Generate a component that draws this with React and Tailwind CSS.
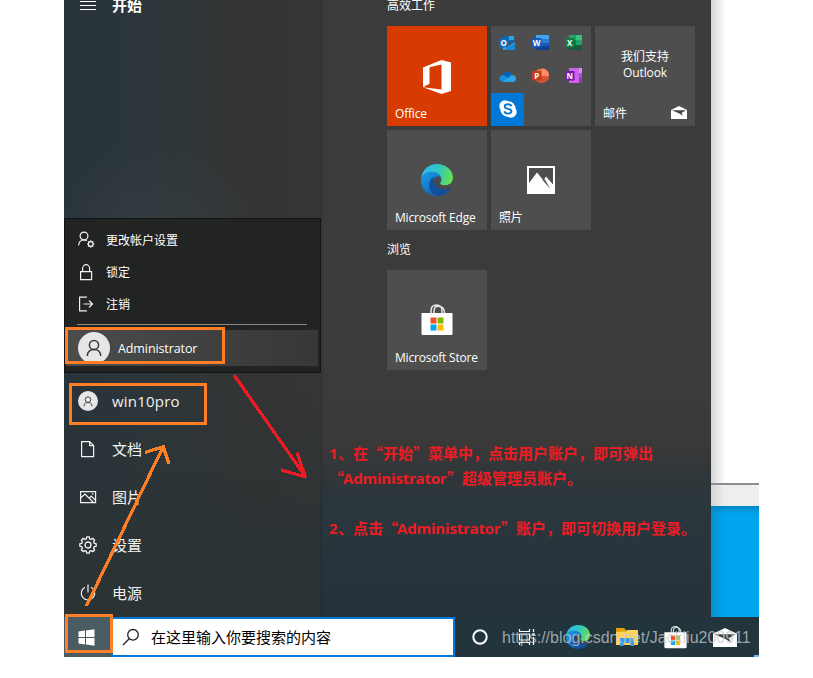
import React from "react";

const latin = "font-['Open_Sans','Noto_Sans_CJK_SC',sans-serif]";

function Person({ className }) {
  return (
    <svg viewBox="0 0 16 18" className={className} fill="none" stroke="#3a3a3a" strokeWidth="1.5">
      <circle cx="8" cy="6" r="4.6" />
      <path d="M1.3 17c0-4.200 3-6.500 6.700-6.500s6.700 2.300 6.700 6.500" />
    </svg>
  );
}

function EdgeLogo({ size, id }) {
  return (
    <svg width={size} height={size} viewBox="0 0 32 32">
      <defs>
        <linearGradient id={id + "a"} x1="0" y1="0.3" x2="1" y2="0.5">
          <stop offset="0" stopColor="#35b8f0" />
          <stop offset="0.5" stopColor="#2fc6c4" />
          <stop offset="1" stopColor="#66e04f" />
        </linearGradient>
        <linearGradient id={id + "b"} x1="0" y1="0" x2="0.6" y2="1">
          <stop offset="0" stopColor="#1c9de8" />
          <stop offset="1" stopColor="#0b65c0" />
        </linearGradient>
      </defs>
      <path d="M.2 14C1.200 5.500 8 0 16 0c9.500 0 16 6.500 16 13.500 0 5-3.700 8-8 8-3.300 0-5-1-5-2.300 0-1 1.300-1.500 1.300-3.800C20.300 11 16 8 11 8 6 8 2 10.500.2 14z" fill={`url(#${id}a)`} />
      <path d="M.1 15C1.500 10 6 7.700 10.500 7.700c5.500 0 9.800 3.500 9.800 7.700 0 2.200-1.300 2.800-1.300 3.900-1-3.300-3-4.300-5-4.300-3 0-5.500 3-5.500 7 0 5 4 9.600 9.500 10C8 32.700 0 25.500 0 17c0-.7 0-1.400.1-2z" fill={`url(#${id}b)`} />
      <path d="M13.800 12.300C10.500 13.500 8.300 17 8.300 21.500c0 5.500 4.200 10.300 9.700 10.300 5 0 9-2.800 11.200-6.600.4-.7 0-1.100-.7-.8-1.500.7-3.200 1-4.800 1-6 0-10.900-3.900-10.900-8.400 0-2 .3-3.500 1-4.700z" fill="#124f9c" />
      <path d="M16.300 12.200c2.300 0 4 1.500 4 3.400 0 1.800-1.300 2.500-1.300 3.600 0 1.400 2 2.300 5 2.300 1.800 0 3.500-.5 4.800-1.400l.5 4.300c-1.500.7-3 1-5.300 1-6 0-10.500-4-10.500-8.700 0-2.700 1.100-4.500 2.800-4.500z" fill="#46494c" />
    </svg>
  );
}

function StoreLogo({ w, h }) {
  return (
    <svg width={w} height={h} viewBox="0 0 32 31">
      <path d="M10 9.500V7c0-4 2.300-6 5.500-6S21 3 21 7v2.500M13 9.500V7c0-3 1.800-4.700 4.200-4.700 4 0 6.300 2 6.300 7.200" fill="none" stroke="#e6e6e6" strokeWidth="1.500" />
      <path d="M.5 9h31v20.500a1.500 1.500 0 0 1-1.500 1.500H2A1.500 1.500 0 0 1 .5 29.500z" fill="#fff" />
      <path d="M9.500 13.500h6v6h-6z" fill="#f25022" />
      <path d="M16.500 13.500h6v6h-6z" fill="#7fba00" />
      <path d="M9.500 20.500h6v6h-6z" fill="#00a4ef" />
      <path d="M16.500 20.500h6v6h-6z" fill="#ffb900" />
    </svg>
  );
}

function MailGlyph({ w, h }) {
  return (
    <svg width={w} height={h} viewBox="0 0 16 13" preserveAspectRatio="none">
      <path d="M0 4 8 0l8 4v9H0z" fill="#fff" />
      <path d="M1 4.200h14L10.500 7 12 9.800 8.300 7.500z" fill="#3f4446" />
    </svg>
  );
}

function Badge({ color, letter }) {
  return (
    <>
      <rect x="0" y="3" width="9.500" height="9.500" rx=".8" fill={color} />
      <text x="4.700" y="10.600" textAnchor="middle" fontSize="8" fontWeight="700" fill="#fff" fontFamily="Open Sans">{letter}</text>
    </>
  );
}

function SmallApp({ kind }) {
  return (
    <svg width="18" height="16" viewBox="0 0 18 16">
      {kind === "outlook" && (<>
        <path d="M5 1h10v7H5z" fill="#1066b5" /><path d="M10 1h5v4h-5z" fill="#28a8ea" />
        <path d="M4 7.500 10 11l6-4v8H4z" fill="#36b5f3" /><path d="M4 15 16 8v7z" fill="#1687d9" />
        <Badge color="#0f6cbd" letter="O" />
      </>)}
      {kind === "word" && (<>
        <path d="M4 0h13v5H4z" fill="#41a5ee" /><path d="M4 4h13v4H4z" fill="#2b7cd3" />
        <path d="M4 8h13v4H4z" fill="#185abd" /><path d="M4 11h13v4H4z" fill="#103f91" />
        <Badge color="#185abd" letter="W" />
      </>)}
      {kind === "excel" && (<>
        <path d="M4 0h7v5H4z" fill="#21a366" /><path d="M11 0h6v5h-6z" fill="#33c481" />
        <path d="M4 5h7v5H4z" fill="#107c41" /><path d="M11 5h6v5h-6z" fill="#21a366" />
        <path d="M4 10h13v5H4z" fill="#185c37" /><Badge color="#107c41" letter="X" />
      </>)}
      {kind === "onedrive" && (<>
        <path d="M3 10c0-4 2.500-6.500 5.500-6.500 2 0 3.500 1 4.500 3L9 13z" fill="#0364b8" />
        <path d="M.5 10.500C.5 8 2.500 7 4.500 7L15 14H4c-2 0-3.500-1.500-3.500-3.500z" fill="#1490df" />
        <path d="M4 14 12.500 7c3 0 4.500 1.500 4.500 3.700 0 2-1.300 3.300-3.500 3.300z" fill="#28a8ea" />
      </>)}
      {kind === "ppt" && (<>
        <circle cx="9.700" cy="7.700" r="7.300" fill="#ed6c47" /><path d="M9.700.4A7.300 7.300 0 0 1 17 7.700H9.700z" fill="#ff8f6b" />
        <path d="M2.500 8.500H17a7.300 7.300 0 0 1-14 2z" fill="#d35230" /><Badge color="#c43e1c" letter="P" />
      </>)}
      {kind === "onenote" && (<>
        <path d="M4 0h13v15H4z" fill="#ca64ea" /><path d="M14 0h3v5h-3z" fill="#d98cf0" />
        <path d="M14 5h3v5h-3z" fill="#ae4bd5" /><path d="M14 10h3v5h-3z" fill="#9332bf" />
        <Badge color="#7719aa" letter="N" />
      </>)}
    </svg>
  );
}

function Tile({ label, children, className = "bg-[#4e4e4e]", gap = "" }) {
  return (
    <div className={`flex h-[100px] w-[100px] flex-col ${className}`}>
      <div className={`flex flex-1 items-center justify-center ${gap}`}>{children}</div>
      <div className="h-[23px] whitespace-nowrap pl-2 text-[12px] leading-[22px] tracking-[-0.2px] text-white">{label}</div>
    </div>
  );
}

function PopupRow({ icon, label }) {
  return (
    <div className="flex h-8 items-center pl-[13px] text-[12px] text-white">
      <span className="w-[28px]">{icon}</span>
      <span className="whitespace-nowrap pt-[2px]">{label}</span>
    </div>
  );
}

function NavRow({ icon, label, tracking = "" }) {
  return (
    <div className="flex h-12 items-center pl-[14px] text-[15px] text-[#f1f1f1]">
      <span className="flex w-[34px] items-center">{icon}</span>
      <span className={`whitespace-nowrap ${tracking}`}>{label}</span>
    </div>
  );
}

const line = { fill: "none", stroke: "#f2f2f2", strokeWidth: 1.2 };

function Gear({ size }) {
  const pts = [];
  for (let i = 0; i < 8; i++) {
    for (const [o, r] of [[-15, 5.8], [-9, 7.4], [9, 7.4], [15, 5.8]]) {
      const a = ((i * 45 + o) * Math.PI) / 180;
      pts.push(`${(9 + r * Math.sin(a)).toFixed(2)},${(9 - r * Math.cos(a)).toFixed(2)}`);
    }
  }
  return (
    <svg width={size} height={size} viewBox="0 0 18 18" {...line}>
      <polygon points={pts.join(" ")} strokeLinejoin="round" />
      <circle cx="9" cy="9" r="2.700" />
    </svg>
  );
}

function LeftPanel() {
  return (
    <div className="flex h-[617px] w-64 flex-col bg-[linear-gradient(180deg,transparent_60%,#2b3335_92%),radial-gradient(ellipse_110px_80px_at_85px_225px,#3840448c,transparent),linear-gradient(90deg,#28333a_0%,#2b363b_25%,#303638_50%,#343433_70%,#363534_100%)]">
      <div className="flex h-[218px] items-start pl-4">
        <svg width="16" height="12" className="shrink-0"><path d="M0 1.500h16M0 5.500h16M0 9.500h16" stroke="#fff" shapeRendering="crispEdges" /></svg>
        <span className="-mt-[6px] ml-4 text-[15px] font-bold leading-[22px] text-white">开始</span>
      </div>
      <div className="relative h-[155px] w-[257px] border border-[#141414] bg-[#222323] pt-[5px]">
        <PopupRow label="更改帐户设置" icon={
          <svg width="17" height="18" viewBox="0 0 17 18" {...line}>
            <circle cx="6" cy="5" r="3.900" /><path d="M.6 14.500c.2-3.500 2.300-5.500 5.400-5.500 1.300 0 2 .3 2.800.8" />
            <circle cx="12.700" cy="13" r="2.300" /><path d="M12.700 9.300v1.400M12.700 15.300v1.400M9 13h1.400M15 13h1.400M10.100 10.400l1 1M14.300 14.600l1 1M10.100 15.600l1-1M14.300 11.400l1-1" />
          </svg>} />
        <PopupRow label="锁定" icon={
          <svg width="16" height="18" viewBox="0 0 16 18" {...line}><path d="M2.600 8.600h11v8h-11zM4.600 8.600V5.500a3.500 3.800 0 0 1 7 0v3.100" /></svg>} />
        <PopupRow label="注销" icon={
          <svg width="16" height="16" viewBox="0 0 16 16" {...line}><path d="M9 1.100H1.600v13.800H9M5.500 8H14.500M11 4.500 14.500 8 11 11.500" /></svg>} />
        <div className="ml-3 mt-[4px] h-px w-[230px] bg-[#8a8a8a]" />
        <div className="ml-px mt-[5px] flex h-9 w-[252px] items-center bg-gradient-to-r from-[#4b4c4c] to-[#373737] pl-3">
          <span className="flex h-8 w-8 items-center justify-center rounded-full bg-[#e6e6e6]"><Person className="h-[18px] w-4" /></span>
          <span className="ml-2 pt-[2px] text-[12.500px] tracking-[-0.1px] text-white">Administrator</span>
        </div>
      </div>
      <div className="mt-1 flex flex-col">
        <NavRow label="win10pro" tracking="tracking-[0.2px]" icon={<span className="flex h-5 w-5 items-center justify-center rounded-full bg-[#e6e6e6]"><Person className="h-[11px] w-[10px]" /></span>} />
        <NavRow label="文档" icon={<svg width="20" height="18" viewBox="0 0 20 18" {...line}><path d="M3.600 1.600h8l4 4v11h-12zM11.600 1.600v4h4" /></svg>} />
        <NavRow label="图片" icon={<svg width="20" height="14" viewBox="0 0 20 14" {...line}><path d="M2.600 1.600h15v11h-15zM2.600 8 7 4l8.500 8.500M11 8.500l2.300-2.300 4.300 4.300" /><path d="M14 3.800h1.500" /></svg>} />
        <NavRow label="设置" icon={<span><Gear size={20} /></span>} />
        <NavRow label="电源" icon={<svg width="20" height="18" viewBox="0 0 20 18" {...line}><path d="M7 3.300a6.700 6.700 0 1 0 6 0M10 .5v8" /></svg>} />
      </div>
    </div>
  );
}

function TilePanel() {
  return (
    <div className="flex h-[617px] w-[391px] flex-col bg-[linear-gradient(90deg,#00000020,transparent_5px),linear-gradient(180deg,#3b3b3b_0%,#3b3b3b_65%,#3b3838_72%,#303639_77%,#2a373d_82%,#25323a_100%)] pl-[67px]">
      <div className="h-[26px] text-[12px] leading-[11px] text-white">高效工作</div>
      <div className="flex gap-1">
        <Tile label="Office" className="bg-[#d83b01]" gap="pt-[24px]">
          <svg width="28" height="34" viewBox="0 0 28 34"><path fillRule="evenodd" d="M0 7.500 18.500 0 28 2.500v28.500L18.500 34 0 27.200 18.500 29.500V4.500L6.500 7.300v16.500L0 27.200z" fill="#fff" /></svg>
        </Tile>
        <div className="grid h-[100px] w-[100px] grid-cols-3 grid-rows-3 place-items-center bg-[#4e4e4e]">
          {["outlook", "word", "excel", "onedrive", "ppt", "onenote"].map((k) => <SmallApp key={k} kind={k} />)}
          <div className="flex h-full w-full items-center justify-center bg-[#0078d7]">
            <svg width="18" height="18" viewBox="0 0 18 18">
              <circle cx="6" cy="6" r="5.700" fill="#fff" /><circle cx="12" cy="12" r="5.700" fill="#fff" /><circle cx="9" cy="9" r="7.700" fill="#fff" />
              <path d="M12.300 6.300C12 4.900 10.700 4.300 9 4.300c-2 0-3.300.9-3.300 2.300 0 3.200 6.700 1.500 6.700 4.500 0 1.500-1.400 2.500-3.400 2.500-1.900 0-3.300-.8-3.600-2.300" fill="none" stroke="#0078d7" strokeWidth="1.900" />
            </svg>
          </div>
        </div>
        <div className="flex h-[100px] w-[100px] flex-col bg-[#4e4e4e] text-[12px] text-white">
          <div className="flex-1 pt-[23px] text-center leading-4">我们支持<br /><span className="tracking-[-0.1px]">Outlook</span></div>
          <div className="flex h-[25px] justify-between pl-2 pr-2 leading-[26px]"><span>邮件</span><span className="pt-[5px]"><MailGlyph w={16} h={13} /></span></div>
        </div>
      </div>
      <div className="mt-1 flex gap-1">
        <Tile label="Microsoft Edge" gap="pt-[23px]"><EdgeLogo size={32} id="t" /></Tile>
        <Tile label="照片" gap="pt-[22px]">
          <svg width="28" height="28" viewBox="0 0 28 28"><path fillRule="evenodd" d="M0 0h28v28H0zM2 2v15L10 6.500l6.500 8 2.500-4 7 8V2z" fill="#fff" /><path d="M15.500 14 23 22.500l-5-9z" fill="#4e4e4e" /></svg>
        </Tile>
      </div>
      <div className="h-10 text-[12px] leading-[40px] text-white">浏览</div>
      <Tile label="Microsoft Store" gap="pt-[22px]"><StoreLogo w={32} h={31} /></Tile>
    </div>
  );
}

function Taskbar() {
  return (
    <div className="flex h-10 bg-[#22353d]">
      <div className="flex w-[47px] items-center justify-center bg-[#4a5b62]">
        <svg width="17" height="17" viewBox="0 0 17 17" fill="#fff" className="-ml-[2px]"><path d="M.5 2.500 7 1.600V8H.5zM8 1.400 16.500.2V8H8zM.5 9H7v6.400l-6.500-.9zM8 9h8.500v7.800L8 15.600z" /></svg>
      </div>
      <div className="flex w-[344px] items-center border-2 border-[#0078d7] bg-white pl-[9px] text-[15px] text-black">
        <svg width="18" height="18" viewBox="0 0 18 18" fill="none" stroke="#222" strokeWidth="1.300"><circle cx="11" cy="6.800" r="5.300" /><path d="M7.200 10.700 1 17" /></svg>
        <span className="ml-[11px]">在这里输入你要搜索的内容</span>
      </div>
      <div className="grid w-[294px] grid-cols-6 place-items-center">
        <svg width="18" height="18"><circle cx="9" cy="9" r="6.700" fill="none" stroke="#fff" strokeWidth="2" /></svg>
        <svg width="18" height="18" viewBox="0 0 18 18" className="mr-[3px]" fill="none" stroke="#fff" strokeWidth="1.200"><path d="M1.500 1v2.500h10V1M1.500 6h10v6h-10zM1.500 17v-2.500h10V17M15.500 1v3M15.500 9v8" /><path d="M14.300 6.500h2.500" strokeWidth="2.500" /></svg>
        <EdgeLogo size={24} id="b" />
        <svg width="22" height="18" viewBox="0 0 22 18"><path d="M0 0h8l2 2v5H0z" fill="#e0a100" /><path d="M0 4 10 3.500 11 2h11v15H0z" fill="#ffd25c" /><path d="M4 10h14v8h-3.500v-3h-7v3H4z" fill="#3b9be8" /></svg>
        <StoreLogo w={23} h={24} />
        <MailGlyph w={24} h={19} />
      </div>
    </div>
  );
}

const admin = <span className="-ml-px inline-block w-[104px] font-['Open_Sans'] leading-none tracking-[-0.2px]">Administrator</span>;
const digit = "inline-block w-[9px] font-['Open_Sans'] leading-none";

export default function App() {
  return (
    <div className="h-[678px] w-[813px] overflow-hidden bg-white pl-16">
      <div lang="zh-CN" className={`relative h-[657px] w-[695px] ${latin}`}>
        <div className="flex">
          <LeftPanel />
          <TilePanel />
          <div className="flex h-[617px] w-12 flex-col bg-white">
            <div className="h-[483px] bg-gradient-to-r from-[#d4d4d4] to-white to-[14px]" />
            <div className="h-[2px] bg-[#8b8f95]" />
            <div className="h-[21px] bg-gradient-to-r from-[#d4d4d4] to-[#eeeeee] to-[14px]" />
            <div className="flex-1 bg-[linear-gradient(180deg,#0286c4,transparent_8px),linear-gradient(90deg,#0591d2,#00a4ef_14px)]" />
          </div>
        </div>
        <Taskbar />

        <div className="absolute left-[690px] top-[655px] h-[2px] w-[5px] bg-[#76b9ed]" />
        <div className="absolute left-[1px] top-[327px] h-[37px] w-[160px] border-3 border-[#ff7f27]" />
        <div className="absolute left-[5px] top-[383px] h-[42px] w-[138px] border-3 border-[#ff7f27]" />
        <div className="absolute left-[1px] top-[614px] h-[39px] w-[48px] border-3 border-[#ff7f27]" />
        <svg className="absolute left-0 top-0" width="300" height="657" viewBox="64 0 300 657" fill="none" shapeRendering="crispEdges">
          <path d="M86.500 606 163 447M145 452.500 164 446.500M163 446 169 464" stroke="#ff7f27" strokeWidth="3.200" />
          <path d="M234 375 305 476M281 470 306 477M297 453 305.500 477" stroke="#ed1c24" strokeWidth="3.200" />
        </svg>
        <div className="absolute left-[265px] top-[440px] whitespace-nowrap font-['Noto_Sans_CJK_SC',sans-serif] text-[15px] font-bold leading-[25px] text-[#ed1c24]">
          <p className="h-[25px]"><span className={digit}>1</span>、在“开始”菜单中，点击用户账户，即可弹出</p>
          <p className="h-[25px]">“{admin}”超级管理员账户。</p>
          <p className="mt-[25px] h-[25px]"><span className={digit}>2</span>、点击“{admin}”账户，即可切换用户登录。</p>
        </div>
        <div className="absolute left-[438px] top-[628px] whitespace-nowrap font-['Liberation_Sans',sans-serif] text-[16px] leading-5 text-[#c8ccce]/75">https://blog.csdn.net/Jackliu200911</div>
      </div>
    </div>
  );
}
